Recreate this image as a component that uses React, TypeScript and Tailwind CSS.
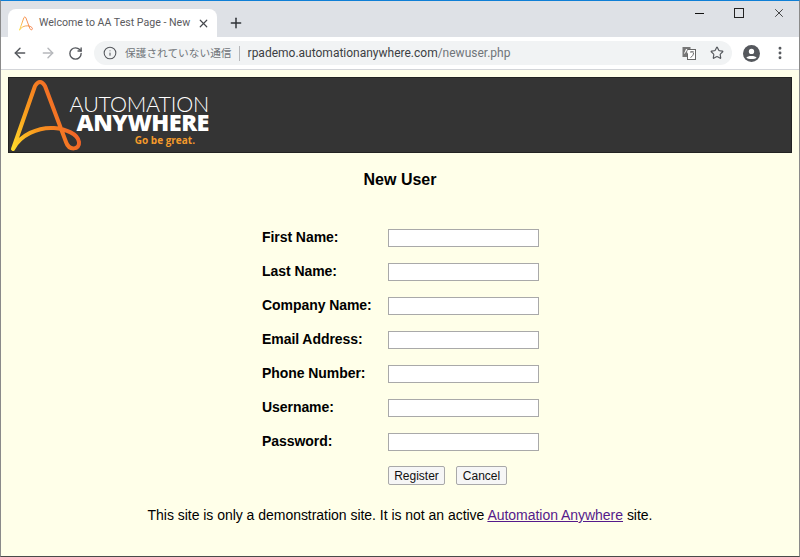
import React from 'react';
import { ArrowLeft, ArrowRight, RotateCw, Info, Star, Plus, X, EllipsisVertical } from 'lucide-react';

const fields = ['First Name:', 'Last Name:', 'Company Name:', 'Email Address:', 'Phone Number:', 'Username:', 'Password:'];

const AaMark = ({ className, id }: { className: string; id: string }) => (
  <svg viewBox="0 0 72 74" fill="none" className={className}>
    <defs>
      <linearGradient id={id} gradientUnits="userSpaceOnUse" x1="2" y1="70" x2="70" y2="40">
        <stop offset="0" stopColor="#ffdc2b" />
        <stop offset="0.4" stopColor="#f8981d" />
        <stop offset="1" stopColor="#f0562a" />
      </linearGradient>
    </defs>
    <path
      d="M3 70 L25 7 Q30 -1 35 7 L56 63 C59 72 70 71 69 63 C68 55 56 50 44 49 C28 48 10 56 3 70"
      stroke={`url(#${id})`}
      strokeWidth="4"
      strokeLinejoin="round"
      strokeLinecap="round"
    />
  </svg>
);

const TranslateIcon = () => (
  <svg viewBox="0 0 14 14" className="w-[14px] h-[14px]">
    <rect x="0.5" y="1" width="8" height="10" fill="#777" />
    <rect x="5.5" y="3.5" width="8" height="10" fill="#fff" stroke="#666" />
    <path d="M2.5 7.5 L4.5 3 L6 7.5" stroke="#fff" strokeWidth="1" fill="none" />
    <path d="M8 6 H12 M10 5 V6 M8.5 11.5 C10.5 10.5 11.5 8.5 11.5 7" stroke="#555" strokeWidth="0.9" fill="none" />
  </svg>
);

const ProfileIcon = () => (
  <svg viewBox="0 0 16 16" className="w-[17px] h-[17px]">
    <circle cx="8" cy="8" r="8" fill="#55585d" />
    <circle cx="8" cy="6" r="2.5" fill="#fff" />
    <path d="M3.2 12 C4 9.8 12 9.8 12.8 12 C11.5 13.6 4.5 13.6 3.2 12 Z" fill="#fff" />
  </svg>
);

export default function App() {
  return (
    <div className="w-[800px] h-[557px] overflow-hidden flex flex-col bg-[#ffffe9] border-t border-t-[#0f7fd6] border-b border-b-[#4a4a4a] border-x border-x-[#8a8a8a] font-['Liberation_Sans',sans-serif] text-black">
      {/* tab strip */}
      <div className="h-[36px] shrink-0 bg-[#dee1e6] flex items-end pl-[7px]">
        <div className="w-[209px] h-[28px] bg-white rounded-t-lg flex items-center pl-[11px] pr-[7px]">
          <AaMark id="aa-tab" className="w-[14px] h-[15px] shrink-0" />
          <span className="ml-[6px] whitespace-nowrap text-[10.6px] text-[#5a5a5e] font-['Roboto',sans-serif]">Welcome to AA Test Page - New</span>
          <X className="ml-auto w-[13px] h-[13px] text-[#45484d]" strokeWidth={2.2} />
        </div>
        <div className="h-[28px] flex items-center ml-[11px]">
          <Plus className="w-[16px] h-[16px] text-[#2f3237]" strokeWidth={2.2} />
        </div>
        <div className="ml-auto self-start flex items-center h-[24px] pr-[13px] gap-[26px] text-[#222]">
          <div className="w-[14px] flex justify-center"><span className="w-[9px] h-px bg-[#111]" /></div>
          <div className="w-[14px] flex justify-center"><span className="w-[10px] h-[10px] border border-[#222]" /></div>
          <X className="w-[14px] h-[14px]" strokeWidth={1.4} />
        </div>
      </div>
      {/* toolbar */}
      <div className="h-[33px] shrink-0 bg-white border-b border-b-[#d3d5d9] flex items-center pl-[11px] pr-[10px]">
        <ArrowLeft className="w-[16px] h-[16px] text-[#55585d]" strokeWidth={2.2} />
        <ArrowRight className="ml-[12px] w-[16px] h-[16px] text-[#b6b8bc]" strokeWidth={2.2} />
        <RotateCw className="ml-[12px] w-[15px] h-[15px] text-[#55585d]" strokeWidth={2.2} />
        <div className="ml-[11px] w-[638px] h-[24px] rounded-full bg-[#f1f3f4] flex items-center pl-[9px] pr-[8px]">
          <Info className="w-[14px] h-[14px] text-[#55585d]" strokeWidth={1.8} />
          <span className="ml-[8px] text-[10.7px] text-[#70757a] font-['Noto_Sans_CJK_JP',sans-serif]">保護されていない通信</span>
          <span className="ml-[7px] w-px h-[15px] bg-[#b5b7ba]" />
          <span className="ml-[8px] text-[12px] font-['Roboto',sans-serif] whitespace-nowrap">
            <span className="text-[#3c4043]">rpademo.automationanywhere.com</span>
            <span className="text-[#70757a]">/newuser.php</span>
          </span>
          <div className="ml-auto flex items-center gap-[14px]">
            <TranslateIcon />
            <Star className="w-[14px] h-[14px] text-[#55585d]" strokeWidth={2} />
          </div>
        </div>
        <div className="ml-[11px]"><ProfileIcon /></div>
        <EllipsisVertical className="ml-[12px] w-[16px] h-[16px] text-[#55585d]" strokeWidth={2.4} />
      </div>
      {/* page */}
      <div className="flex-1 flex flex-col items-stretch pt-[7px] px-[7px]">
        <div className="h-[76px] bg-[#343434] border border-[#222] relative flex items-start">
          <AaMark id="aa-logo" className="absolute left-[1px] top-[1px] w-[72px] h-[74px]" />
          <div className="ml-[62px] mt-[18px] flex flex-col items-end w-[138px] text-white">
            <span className="text-[21.5px] leading-[17px] font-light tracking-[-0.2px] font-['Lato',sans-serif]">AUTOMATION</span>
            <span className="text-[23.5px] leading-[18px] font-extrabold tracking-[-0.5px] font-['Open_Sans',sans-serif]">ANYWHERE</span>
            <span className="mt-[3px] mr-[14px] text-[10px] leading-[12px] font-bold text-[#f39a2b] font-['Open_Sans',sans-serif]">Go be great.</span>
          </div>
        </div>
        <h1 className="mt-[17px] text-center text-[16px] leading-[20px] font-bold">New User</h1>
        <div className="mt-[39px] ml-[254px] flex flex-col gap-[16px]">
          {fields.map(f => (
            <div key={f} className="flex items-center h-[18px]">
              <label className="w-[126px] mb-[2px] text-[14px] font-bold tracking-[-0.06px]">{f}</label>
              <input className="w-[151px] h-[18px] bg-white border border-[#a9a9a9] outline-none" />
            </div>
          ))}
        </div>
        <div className="mt-[15px] ml-[380px] flex gap-[11px]">
          <button className="w-[57px] h-[19px] rounded-[2px] bg-[#f6f6f6] border border-[#a9a9a9] text-[12px] leading-none text-[#111]">Register</button>
          <button className="w-[51px] h-[19px] rounded-[2px] bg-[#f6f6f6] border border-[#a9a9a9] text-[12px] leading-none text-[#111]">Cancel</button>
        </div>
        <p className="mt-[21px] text-center text-[14px] leading-[18px] tracking-[-0.03px]">
          This site is only a demonstration site. It is not an active <a href="#" className="text-[#551a8b] underline">Automation Anywhere</a> site.
        </p>
      </div>
    </div>
  );
}
